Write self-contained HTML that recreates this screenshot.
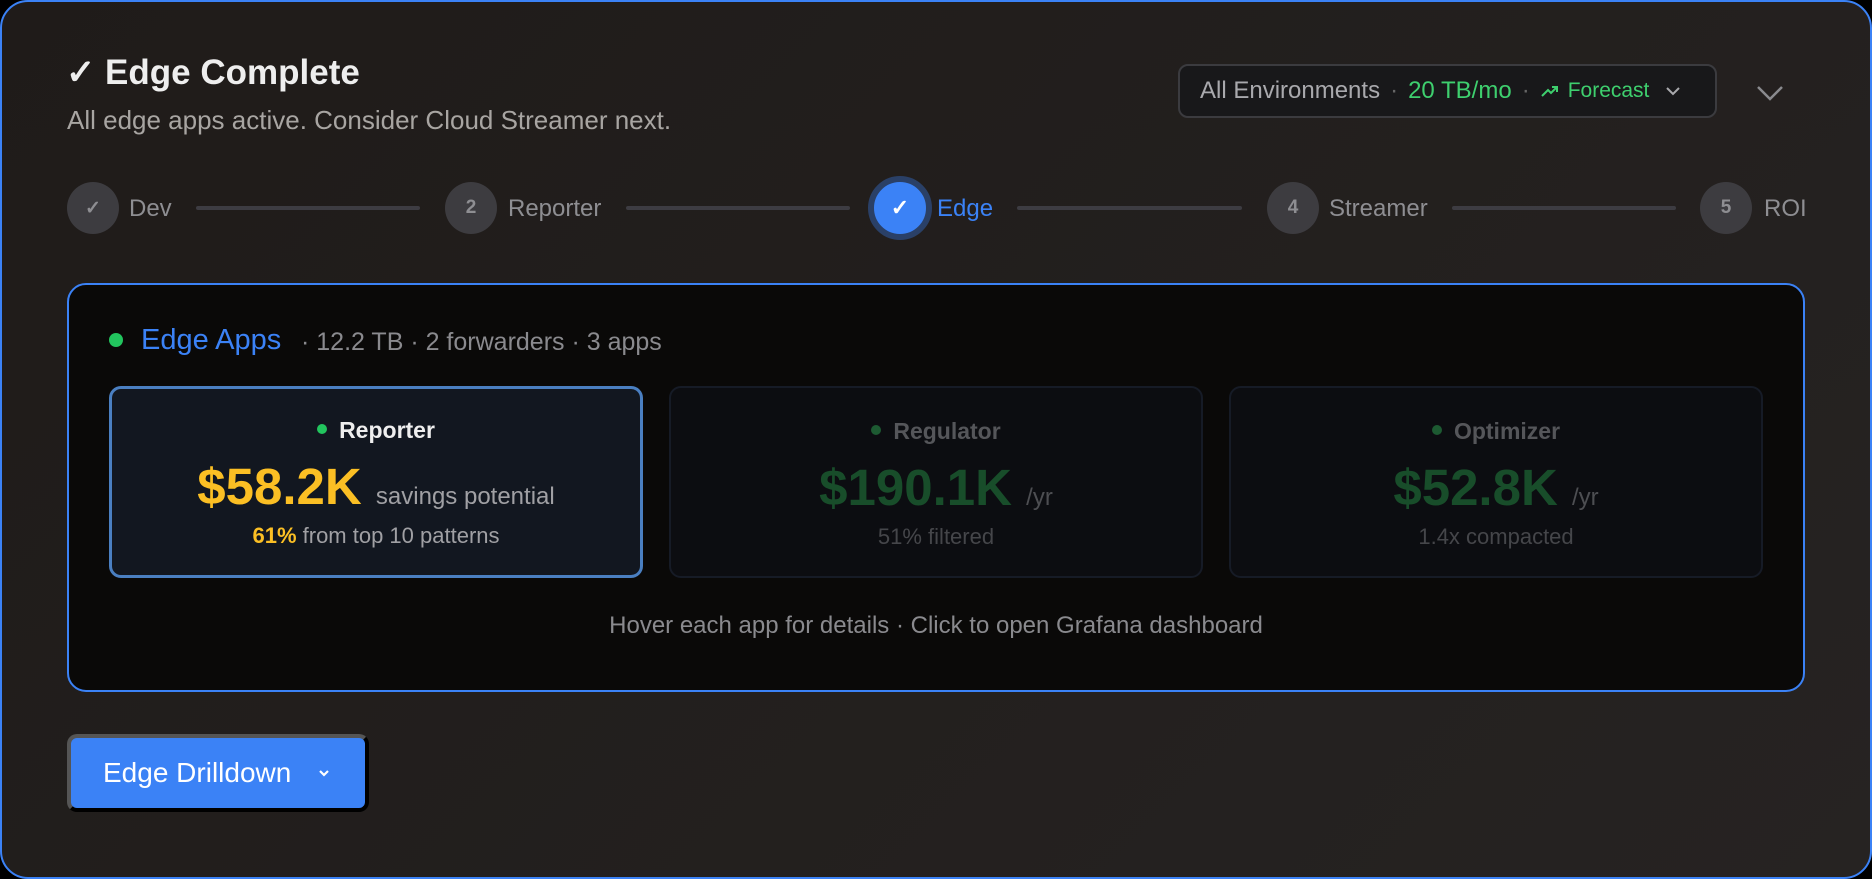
<!DOCTYPE html>
<html><head><meta charset="utf-8"><style>
*{box-sizing:border-box;margin:0;padding:0}
body{width:1872px;height:879px;background:#000;font-family:"Liberation Sans",sans-serif;overflow:hidden;position:relative}
.outer{position:absolute;left:0;top:0;width:1872px;height:879px;border:2px solid #3b82f6;border-radius:28px;background:linear-gradient(135deg,#1f1b19,#262322)}
.a{position:absolute;white-space:nowrap}
.title{left:66px;top:53px;font-size:35px;font-weight:bold;color:#eeeeee}
.sub{left:67px;top:105px;font-size:26px;color:#a8a5a2}
.circ{position:absolute;width:52px;height:52px;border-radius:50%;background:#3d3c40;color:#8e8e92;font-size:19px;font-weight:bold;display:flex;align-items:center;justify-content:center;top:182px}
.lbl{position:absolute;top:195px;font-size:24px;color:#8e8e92}
.line{position:absolute;top:206px;height:4px;background:#3d3c42;border-radius:2px}
.pill{left:1178px;top:64px;width:539px;height:54px;border:2px solid #3b3b3f;border-radius:10px;background:#18181a;font-size:24px;color:#a9a9ad;display:flex;align-items:center;padding-left:20px}
.g{color:#3ecf6e}
.inner{left:67px;top:283px;width:1738px;height:409px;border:2px solid #3b82f6;border-radius:19px;background:#0a0908}
.card{position:absolute;top:386px;width:534px;height:192px;border-radius:12px;text-align:center}
.ct{margin-top:30px;font-size:23px;font-weight:bold;color:#55565a}
.dot{display:inline-block;width:10px;height:10px;border-radius:50%;background:#1d5a32;margin-right:12px;vertical-align:4px}
.big{margin-top:14px;font-size:51px;font-weight:bold;color:#184d2a;line-height:58px}
.big span{font-size:24px;font-weight:normal;color:#4d4e52}
.sm{margin-top:-3px;font-size:22px;color:#45464a}
</style></head><body>
<div class="outer"></div>
<div class="a title">✓ Edge Complete</div>
<div class="a sub">All edge apps active. Consider Cloud Streamer next.</div>

<div class="circ" style="left:67px">✓</div><div class="lbl" style="left:129px">Dev</div>
<div class="line" style="left:196px;width:224px"></div>
<div class="circ" style="left:445px">2</div><div class="lbl" style="left:508px">Reporter</div>
<div class="line" style="left:626px;width:224px"></div>
<div class="circ" style="left:868px;top:176px;width:64px;height:64px;background:#3b82f6;border:6px solid #2a4067;color:#fff;font-size:22px">✓</div><div class="lbl" style="left:937px;color:#3b82f6">Edge</div>
<div class="line" style="left:1017px;width:225px"></div>
<div class="circ" style="left:1267px">4</div><div class="lbl" style="left:1329px">Streamer</div>
<div class="line" style="left:1452px;width:224px"></div>
<div class="circ" style="left:1700px">5</div><div class="lbl" style="left:1764px">ROI</div>

<div class="a pill">All Environments<span style="margin:0 10px;color:#666">·</span><span class="g">20 TB/mo</span><span style="margin:0 10px;color:#666">·</span>
<svg width="20" height="14" viewBox="0 0 20 14" style="margin-right:8px"><path d="M2 12 L8 6 L11 9 L17 3 M12 3 H17 V8" fill="none" stroke="#3ecf6e" stroke-width="2"/></svg><span class="g" style="font-size:21px">Forecast</span>
<svg width="16" height="10" viewBox="0 0 16 10" style="margin-left:16px"><path d="M2 2 L8 8 L14 2" fill="none" stroke="#a9a9ad" stroke-width="2"/></svg></div>
<svg class="a" style="left:1756px;top:84px" width="28" height="18" viewBox="0 0 28 18"><path d="M2 3 L14 15 L26 3" fill="none" stroke="#8a8a8e" stroke-width="2.5"/></svg>

<div class="a inner"></div>
<div class="a" style="left:109px;top:333px;width:14px;height:14px;border-radius:50%;background:#22c55e"></div>
<div class="a" style="left:141px;top:324px;font-size:29px;color:#3b82f6">Edge Apps</div>
<div class="a" style="left:301px;top:328px;font-size:25px;color:#8a8a8e">· 12.2 TB · 2 forwarders · 3 apps</div>

<div class="card" style="left:109px;background:#121720;border:3px solid #4a7fc1">
<div class="ct" style="color:#eee;margin-top:28px"><span class="dot" style="background:#22c55e"></span>Reporter</div>
<div class="big" style="color:#fbbf24">$58.2K <span style="color:#a0a0a4">savings potential</span></div>
<div class="sm" style="color:#a0a0a4"><b style="color:#fbbf24">61%</b> from top 10 patterns</div></div>
<div class="card" style="left:669px;background:#0c0d11;border:2px solid #161b26">
<div class="ct"><span class="dot"></span>Regulator</div>
<div class="big">$190.1K <span>/yr</span></div>
<div class="sm">51% filtered</div></div>
<div class="card" style="left:1229px;background:#0c0d11;border:2px solid #161b26">
<div class="ct"><span class="dot"></span>Optimizer</div>
<div class="big">$52.8K <span>/yr</span></div>
<div class="sm">1.4x compacted</div></div>

<div class="a" style="left:67px;width:1738px;top:612px;text-align:center;font-size:24px;color:#8a8a8e">Hover each app for details · Click to open Grafana dashboard</div>

<div class="a" style="left:67px;top:734px;width:302px;height:78px;border-radius:10px;background:#3b82f6;border:4px solid #000;border-top-color:#555;border-left-color:#555;color:#fff;font-size:28px;display:flex;align-items:center;padding-left:32px">Edge Drilldown
<svg width="14" height="10" viewBox="0 0 14 10" style="margin-left:26px"><path d="M3 3 L7 7 L11 3" fill="none" stroke="#fff" stroke-width="2.2"/></svg></div>
</body></html>
